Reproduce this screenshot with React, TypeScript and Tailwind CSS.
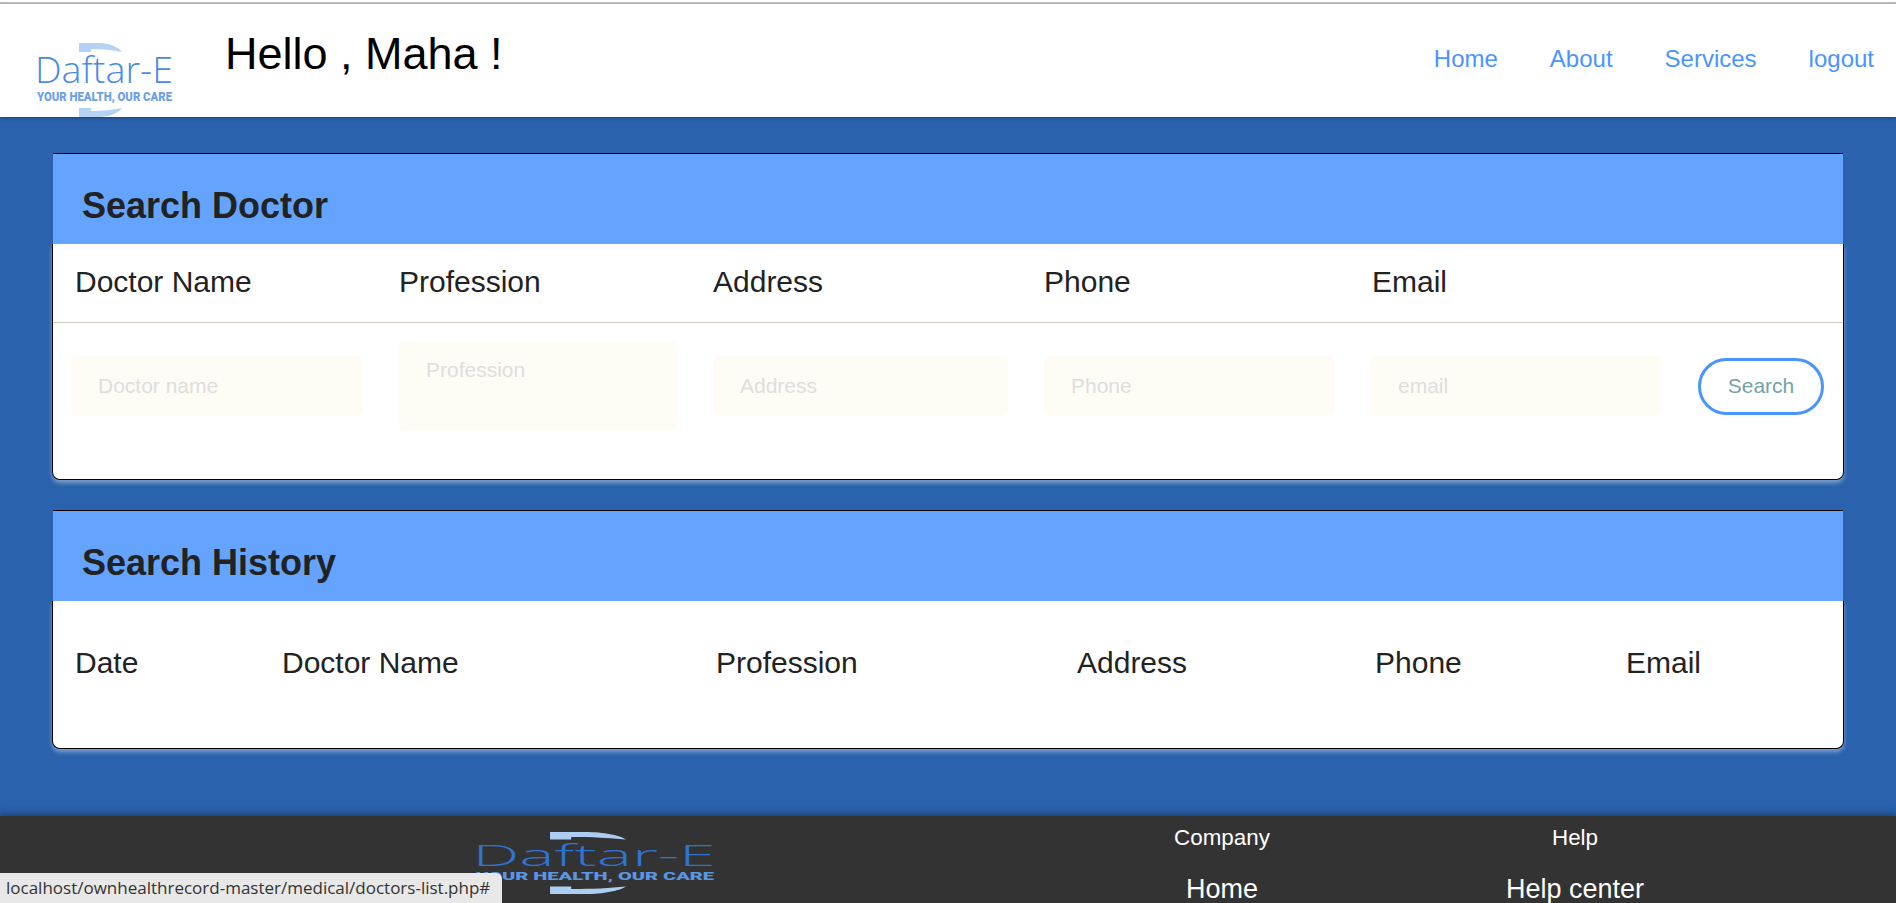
import React from 'react';

const navLinks = ['Home', 'About', 'Services', 'logout'];
const searchHeads = ['Doctor Name', 'Profession', 'Address', 'Phone', 'Email'];
const historyHeads = ['Date', 'Doctor Name', 'Profession', 'Address', 'Phone', 'Email'];

function Logo({ className, word, tag, bar }: { className: string; word: string; tag: string; bar: string }) {
  return (
    <svg viewBox="0 0 135 74" preserveAspectRatio="none" className={className + ' overflow-visible'}>
      <path d="M42 0 L62 0 C72 0 82 4 85 9 C76 7 66 6 54 6 L54 9 L42 9 Z" fill={bar} />
      <path d="M42 74 L62 74 C72 74 82 70 85 65 C76 67 66 68 54 68 L54 65 L42 65 Z" fill={bar} />
      <text x="-2" y="40" textLength="138" lengthAdjust="spacingAndGlyphs" fontFamily="'Open Sans', sans-serif" fontWeight="300" fontSize="36" fill={word}>
        Daftar-E
      </text>
      <text x="0" y="57.5" textLength="135" lengthAdjust="spacingAndGlyphs" fontFamily="Roboto, sans-serif" fontWeight="900" fontSize="13.5" fill={tag}>
        YOUR HEALTH, OUR CARE
      </text>
    </svg>
  );
}

function Field({ placeholder, tall }: { placeholder: string; tall?: boolean }) {
  return (
    <div
      className={
        tall
          ? 'w-[278px] h-[90px] bg-[#fffcf5] rounded-md pl-[27px] pt-[17px] text-[21px] leading-[24px] text-[#dedede]'
          : 'h-[60px] bg-[#fffcf5] rounded-md pl-[27px] flex items-center text-[21px] text-[#dedede]'
      }
    >
      {placeholder}
    </div>
  );
}

function CardTitle({ title }: { title: string }) {
  return (
    <div className="mx-px h-[91px] border-t border-black bg-[#64a4ff] pl-[29px] pt-[32px] text-[36px] leading-[40px] font-bold text-[#222222]">
      {title}
    </div>
  );
}

export default function App() {
  return (
    <div className="relative h-screen overflow-hidden flex flex-col bg-[#2a62ae] font-['Liberation_Sans',Arial,sans-serif]">
      <div className="h-[2px] bg-white" />
      <div className="h-[2px] bg-[#c0c0c0]" />

      <header className="h-[113px] bg-white flex shadow-[0_1px_3px_rgba(0,0,0,0.35)]">
        <div className="pl-[37px] pt-[39px]">
          <Logo className="w-[135px] h-[74px]" word="#4a8ae4" tag="#6d9fe8" bar="#b5d2f5" />
        </div>
        <h1 className="ml-[53px] mt-[20px] text-[45px] leading-[60px] text-black">Hello , Maha !</h1>
        <nav className="ml-auto mr-[22px] mt-[40px] flex gap-[52px] text-[24px] leading-[30px] text-[#4a94ff]">
          {navLinks.map((link) => (
            <a key={link} href="#">
              {link}
            </a>
          ))}
        </nav>
      </header>

      <main className="flex-1 px-[52px] pt-[36px]">
        <section>
          <CardTitle title="Search Doctor" />
          <div className="h-[236px] bg-white border-x border-b border-black rounded-b-lg shadow-[0_3px_4px_rgba(255,255,255,0.4)]">
            <div className="h-[79px] pb-[3px] border-b border-[#cfcabd] pl-[22px] grid grid-cols-[324px_314px_331px_328px_1fr] items-center text-[30px] text-[#222222]">
              {searchHeads.map((head) => (
                <div key={head}>{head}</div>
              ))}
            </div>
            <div className="pl-[18px] pt-[18px] grid grid-cols-[292px_278px_295px_291px_291px_1fr] gap-x-[36px] items-center">
              <Field placeholder="Doctor name" />
              <Field placeholder="Profession" tall />
              <Field placeholder="Address" />
              <Field placeholder="Phone" />
              <Field placeholder="email" />
              <button className="w-[126px] h-[57px] border-[3px] border-[#4a94ff] rounded-full text-[21px] text-[#72a3a8]">
                Search
              </button>
            </div>
          </div>
        </section>

        <section className="mt-[30px]">
          <CardTitle title="Search History" />
          <div className="h-[148px] bg-white border-x border-b border-black rounded-b-lg shadow-[0_3px_4px_rgba(255,255,255,0.4)]">
            <div className="h-[125px] pb-[2px] pl-[22px] grid grid-cols-[207px_434px_361px_298px_251px_1fr] items-center text-[30px] text-[#222222]">
              {historyHeads.map((head) => (
                <div key={head}>{head}</div>
              ))}
            </div>
          </div>
        </section>
      </main>

      <footer className="h-[87px] bg-[#333333] flex shadow-[0_-3px_6px_rgba(0,0,0,0.3)] text-white text-center">
        <div className="pl-[476px] pt-[16px]">
          <Logo className="w-[238px] h-[62px]" word="#2f74d2" tag="#5a96e4" bar="#aecdf3" />
        </div>
        <div className="ml-[388px] w-[240px] pt-[9px]">
          <div className="text-[22.4px] leading-[26px]">Company</div>
          <div className="mt-[22px] text-[27px] leading-[32px]">Home</div>
        </div>
        <div className="ml-[113px] w-[240px] pt-[9px]">
          <div className="text-[22.4px] leading-[26px]">Help</div>
          <div className="mt-[22px] text-[27px] leading-[32px]">Help center</div>
        </div>
      </footer>

      <div className="absolute left-0 bottom-0 h-[30px] w-[502px] bg-[#e8e8e8] rounded-tr-md pl-[6px] flex items-center text-[17px] text-[#333333] font-['Open_Sans',sans-serif] whitespace-nowrap">
        localhost/ownhealthrecord-master/medical/doctors-list.php#
      </div>
    </div>
  );
}
